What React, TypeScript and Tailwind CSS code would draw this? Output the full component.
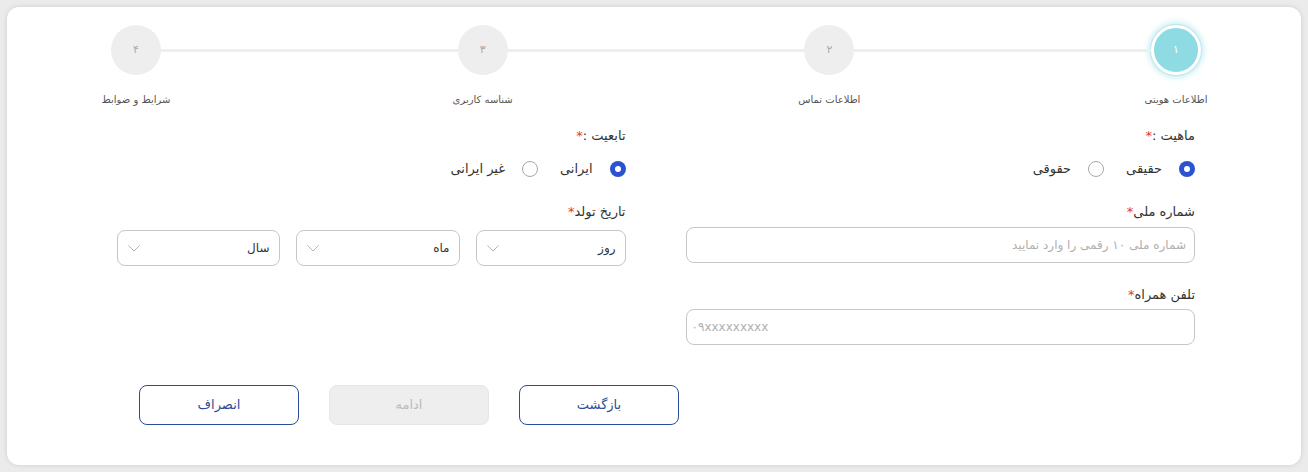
import React from "react";

const steps = [
  { n: "۱", label: "اطلاعات هویتی", active: true },
  { n: "۲", label: "اطلاعات تماس", active: false },
  { n: "۳", label: "شناسه کاربری", active: false },
  { n: "۴", label: "شرایط و ضوابط", active: false },
];

function Chevron() {
  return (
    <svg width="12" height="7" viewBox="0 0 12 7" fill="none">
      <path d="M0.5 0.5L6 6L11.5 0.5" stroke="#b5b5b5" strokeWidth="1" />
    </svg>
  );
}

function Label({ text }: { text: string }) {
  return (
    <div className="h-5 leading-5 text-[13px] text-[#333]">
      {text}
      <span className="text-[#e53935]">*</span>
    </div>
  );
}

function Radio({ checked, text }: { checked: boolean; text: string }) {
  return (
    <div className="flex items-center gap-[17px]">
      {checked ? (
        <span className="w-4 h-4 rounded-full bg-[#2a52d2] flex items-center justify-center">
          <span className="w-[6px] h-[6px] rounded-full bg-white" />
        </span>
      ) : (
        <span className="w-4 h-4 rounded-full border border-[#a8a8a8] bg-white" />
      )}
      <span className="text-[13px] text-[#333]">{text}</span>
    </div>
  );
}

function Select({ text, width }: { text: string; width: string }) {
  return (
    <div className={`${width} h-9 rounded-lg border border-[#c6c6c6] flex items-center justify-between pr-[9px] pl-[10px]`}>
      <span className="text-[12px] text-[#333]">{text}</span>
      <Chevron />
    </div>
  );
}

export default function App() {
  return (
    <div dir="rtl" className="min-h-screen bg-[#ebebeb] p-[7px] font-['DejaVu_Sans',sans-serif]">
      <div className="h-[458px] bg-white rounded-xl shadow-[0_0_5px_rgba(0,0,0,0.12)] pt-[18px]">
        {/* Stepper */}
        <div className="flex items-start pr-[100px] pl-[104px]">
          {steps.map((s, i) => (
            <React.Fragment key={s.n}>
              <div className="w-[50px] flex flex-col items-center">
                {s.active ? (
                  <div className="w-[50px] h-[50px] rounded-full bg-[#8fdbe3] border-[3px] border-white shadow-[0_0_0_1px_#b7e8ee,0_0_6px_2px_rgba(143,219,227,0.6)] flex items-center justify-center text-[11px] text-white">
                    {s.n}
                  </div>
                ) : (
                  <div className="w-[50px] h-[50px] rounded-full bg-[#eeeeee] flex items-center justify-center text-[11px] text-[#aaa]">
                    {s.n}
                  </div>
                )}
                <div className="mt-[17px] h-4 leading-4 text-[10px] text-[#555] whitespace-nowrap">{s.label}</div>
              </div>
              {i < steps.length - 1 && <div className="flex-1 h-[3px] bg-[#eeeeee] mt-[24px]" />}
            </React.Fragment>
          ))}
        </div>

        {/* Form */}
        <div className="grid grid-cols-2 gap-x-[60px] pr-[106px] pl-[109px] mt-[18px]">
          <div className="flex flex-col">
            <Label text="ماهیت :" />
            <div className="flex items-center gap-[22px] mt-[13px] h-5">
              <Radio checked text="حقیقی" />
              <Radio checked={false} text="حقوقی" />
            </div>
            <div className="mt-[23px]">
              <Label text="شماره ملی" />
            </div>
            <input
              className="mt-[5px] h-9 w-full rounded-lg border border-[#c6c6c6] px-[8px] text-[12px] outline-none placeholder:text-[#b0b0b0]"
              placeholder="شماره ملی ۱۰ رقمی را وارد نمایید"
            />
            <div className="mt-[22px]">
              <Label text="تلفن همراه" />
            </div>
            <input
              dir="ltr"
              className="mt-[4px] h-9 w-full rounded-lg border border-[#c6c6c6] px-[5px] text-[12px] outline-none placeholder:text-[#b0b0b0]"
              placeholder="۰۹xxxxxxxxx"
            />
          </div>
          <div className="flex flex-col">
            <Label text="تابعیت :" />
            <div className="flex items-center gap-[22px] mt-[13px] h-5">
              <Radio checked text="ایرانی" />
              <Radio checked={false} text="غیر ایرانی" />
            </div>
            <div className="mt-[23px]">
              <Label text="تاریخ تولد" />
            </div>
            <div className="mt-[8px] flex gap-4">
              <Select text="روز" width="w-[150px]" />
              <Select text="ماه" width="w-[164px]" />
              <Select text="سال" width="w-[163px]" />
            </div>
          </div>
        </div>

        {/* Actions */}
        <div className="flex justify-end gap-[30px] pl-[132px] mt-[40px]">
          <button className="w-[160px] h-10 rounded-lg border border-[#2b4c9b] bg-white text-[13px] text-[#2b4c9b]">
            بازگشت
          </button>
          <button disabled className="w-[160px] h-10 rounded-lg border border-[#e6e6e6] bg-[#eeeeee] text-[13px] text-[#bcbcbc]">
            ادامه
          </button>
          <button className="w-[160px] h-10 rounded-lg border border-[#2b4c9b] bg-white text-[13px] text-[#2b4c9b]">
            انصراف
          </button>
        </div>
      </div>
    </div>
  );
}
